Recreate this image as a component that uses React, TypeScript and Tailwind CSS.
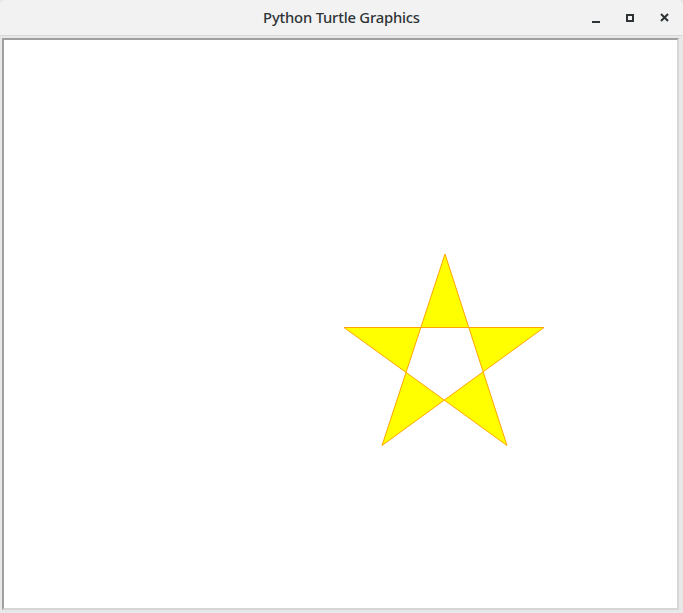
const App = () => {
  return (
    <div className="w-[683px] h-[613px] flex flex-col bg-[#e8e8e8] font-['Noto_Sans',sans-serif]">
      {/* title bar */}
      <div className="relative h-[36px] shrink-0 flex items-center justify-center bg-[#f2f2f2] border-b border-[#d8d8d8] rounded-t-[6px]">
        <span className="text-[14.8px] font-medium text-[#2e3436] tracking-[-0.2px]">Python Turtle Graphics</span>
        <div className="absolute right-[14px] top-0 h-full flex items-center gap-[26px] text-[#2e3436]">
          <svg width="8" height="8" viewBox="0 0 8 8" className="mt-[2px]">
            <rect x="0" y="6" width="8" height="2" fill="currentColor" />
          </svg>
          <svg width="8" height="8" viewBox="0 0 8 8">
            <rect x="1" y="1" width="6" height="6" fill="none" stroke="currentColor" strokeWidth="2" />
          </svg>
          <svg width="9" height="9" viewBox="0 0 9 9">
            <path d="M1 1 L8 8 M8 1 L1 8" stroke="currentColor" strokeWidth="2" />
          </svg>
        </div>
      </div>

      {/* window body */}
      <div className="flex-1 flex pt-[2px] pl-[2px] pr-[4px] pb-[3px]">
        <div className="relative flex-1 bg-white border-l-2 border-t-2 border-[#a0a0a0] border-r-2 border-b-2 border-r-[#d6d6d6] border-b-[#d6d6d6]">
          <svg className="absolute left-0 top-0" width="675" height="570">
            <polygon
              points="340,287.5 540,287.5 378,405.5 441,214 503,405.5"
              fill="#ffff00"
              fillRule="evenodd"
              stroke="#ffa500"
              strokeWidth="1"
            />
          </svg>
        </div>
      </div>
    </div>
  )
}

export default App
